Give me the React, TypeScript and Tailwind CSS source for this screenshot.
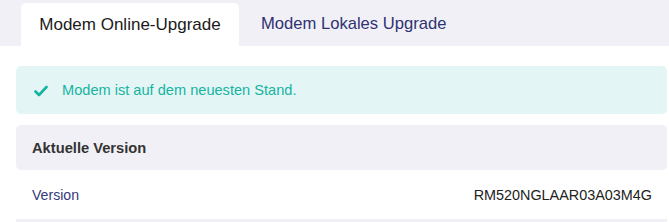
export default function App() {
  return (
    <div className="h-[222px] w-[669px] overflow-hidden bg-white font-['Liberation_Sans',Arial,sans-serif]">
      <div className="flex h-[46px] items-end gap-[22px] bg-[#f1f0f6] pl-[21px]">
        <div className="flex h-[43px] w-[218px] items-center justify-center rounded-t-[5px] bg-white text-[17px] text-[#1a1a1a]">
          Modem Online-Upgrade
        </div>
        <div className="flex h-[43px] items-center text-[16.6px] text-[#2f3273]">Modem Lokales Upgrade</div>
      </div>

      <div className="pl-[16px] pr-[2px] pt-[20px]">
        <div className="flex h-[48px] items-center gap-[14px] rounded-[5px] bg-[#e3f6f5] pl-[18px] pt-[2px] text-[14.6px] text-[#17b3a1]">
          <svg className="h-[12px] w-[14px]" viewBox="0 0 14 12" fill="none">
            <path d="M1.5 6.5 L5 10 L12.5 2" stroke="currentColor" strokeWidth="2.6" strokeLinecap="round" strokeLinejoin="round" />
          </svg>
          <span>Modem ist auf dem neuesten Stand.</span>
        </div>

        <div className="mt-[11px] flex h-[45px] items-center rounded-[5px] bg-[#f1f0f6] px-[16px] pt-[2px] text-[14.7px] font-bold text-[#333333]">
          Aktuelle Version
        </div>

        <div className="flex h-[49px] items-center justify-between pl-[16px] pr-[15px] pt-[2px]">
          <span className="text-[14.1px] text-[#35387a]">Version</span>
          <span className="text-[14.4px] text-[#222222]">RM520NGLAAR03A03M4G</span>
        </div>
        <div className="h-[4px] bg-[#f1f0f6]" />
      </div>
    </div>
  );
}
